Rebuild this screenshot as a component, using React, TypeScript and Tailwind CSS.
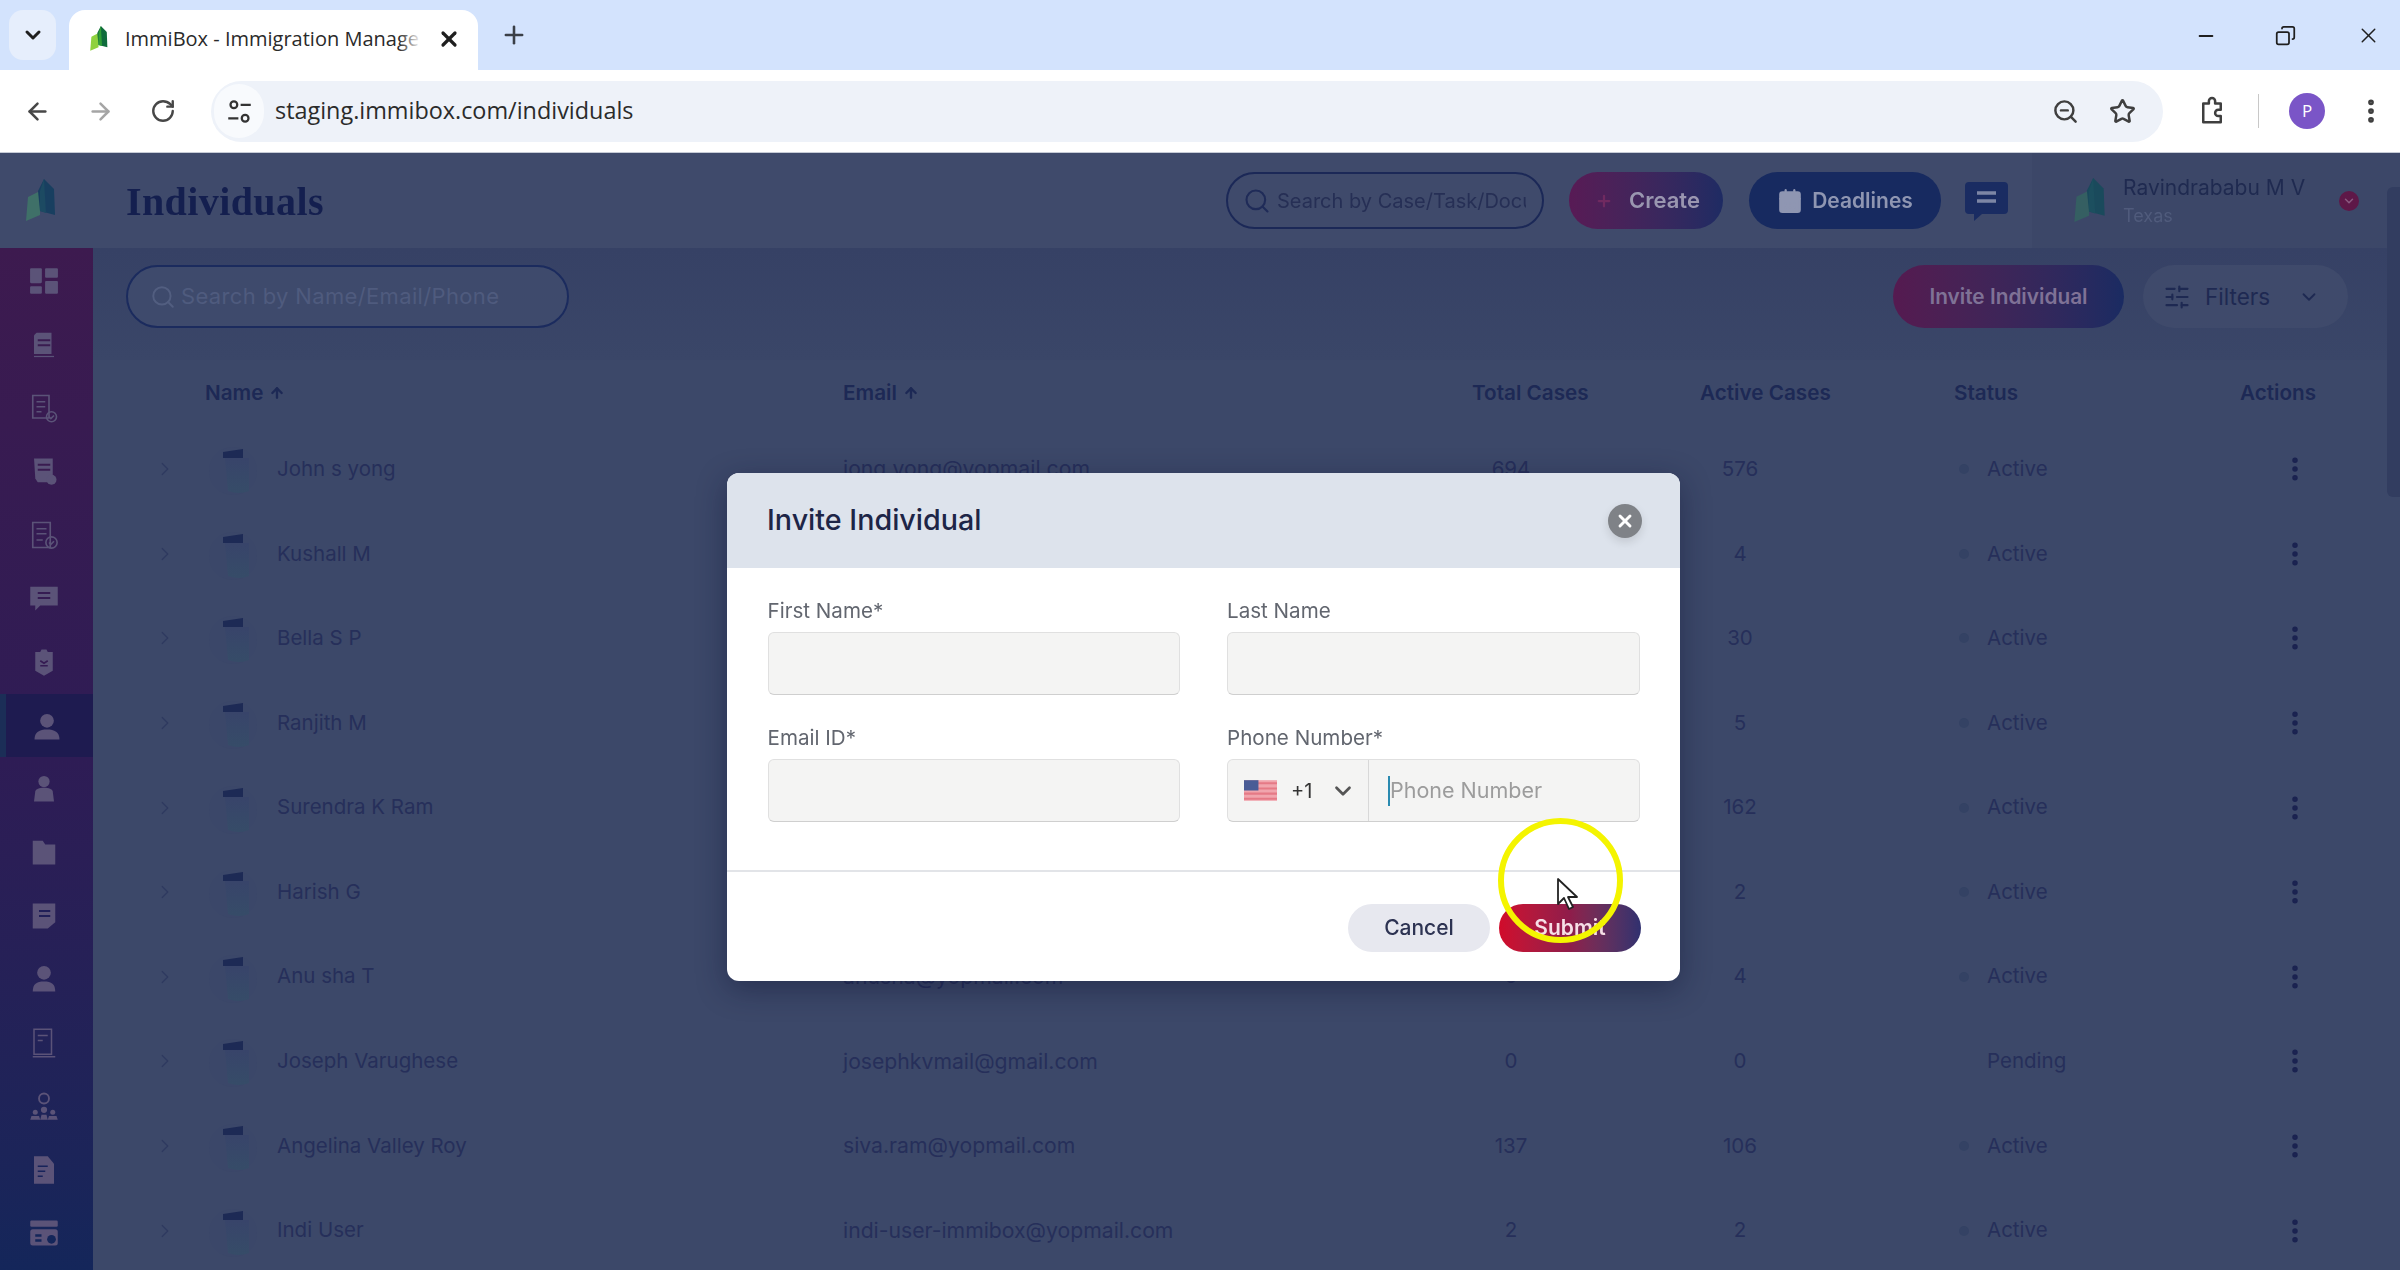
import React from "react";
import {
  ArrowLeft, ArrowRight, ChevronDown, ChevronRight, EllipsisVertical, Minus, Plus, RotateCw, Search,
  SlidersHorizontal, Star, X, ZoomOut, Copy, ArrowUp, CalendarDays,
} from "lucide-react";

const Logo = ({ className, a = "#2f9e35", b = "#0f6b3c", c = "#8fd13f" }: { className?: string; a?: string; b?: string; c?: string }) => (
  <svg viewBox="0 0 32 44" className={className}>
    <path d="M4 18 L16 12 L16 36 L2 42 Z" fill={c} />
    <path d="M14 12 L20 0 L30 10 L31 36 L16 32 Z" fill={b} />
    <path d="M16 12 L20 0 L22 34 L16 32 Z" fill={a} />
  </svg>
);

const s = "w-[30px] h-[30px] text-[#5b5378]";
const sideIcons: React.ReactNode[] = [
  <svg viewBox="0 0 28 26" className={s} fill="currentColor"><rect x="1" y="1" width="11" height="14" rx="1" /><rect x="15" y="1" width="12" height="9" rx="1" /><rect x="1" y="18" width="11" height="7" rx="1" /><rect x="15" y="13" width="12" height="12" rx="1" /></svg>,
  <svg viewBox="0 0 24 24" className={s} fill="currentColor"><path d="M6 3h12v17H4V5z" /><path d="M4 22h16" stroke="currentColor" /><path d="M7 9h10M7 13h10" stroke="#3a1c50" strokeWidth="1.5" /></svg>,
  <svg viewBox="0 0 24 24" className={s} fill="none" stroke="currentColor" strokeWidth="1.3"><path d="M3 2h13v18H3z" /><path d="M6 7h7M6 11h7M6 15h4" /><circle cx="18" cy="19" r="4" /><path d="M16 19l1.5 1.5 2.5-2.5" /></svg>,
  <svg viewBox="0 0 24 24" className={s} fill="currentColor"><path d="M4 2h15v19H7L5 18z" /><path d="M7 7h10M7 11h10" stroke="#3a1c50" strokeWidth="1.5" /><circle cx="18" cy="19" r="4" /></svg>,
  <svg viewBox="0 0 24 24" className={s} fill="none" stroke="currentColor" strokeWidth="1.3"><path d="M3 2h14v20H3z" /><path d="M6 7h8M6 11h8M6 16h5" /><circle cx="18" cy="18" r="4.5" /><path d="M16 18l1.5 1.5 2.5-2.5" /></svg>,
  <svg viewBox="0 0 24 24" className={s} fill="currentColor"><path d="M1 3h22v15H9l-4 4v-4H1z" /><path d="M7 8h10M7 12h10" stroke="#351b52" strokeWidth="1.5" /></svg>,
  <svg viewBox="0 0 24 24" className={s} fill="currentColor"><path d="M5 4h4l1-2h4l1 2h4v15l-7 4-7-4z" /><path d="M9 11l3 2 3-2M9 15h6" stroke="#351b52" strokeWidth="1.3" fill="none" /></svg>,
  <svg viewBox="0 0 24 24" className={s} fill="currentColor"><circle cx="12" cy="7" r="5.5" /><path d="M2 22c0-6 4-8 10-8s10 2 10 8z" /></svg>,
  <svg viewBox="0 0 24 24" className={s} fill="currentColor"><circle cx="12" cy="6" r="4.5" /><path d="M4 22l1-8c.5-2 3-3 7-3s6.500 1 7 3l1 8z" /></svg>,
  <svg viewBox="0 0 24 24" className={s} fill="currentColor"><path d="M3 3h8l2 3h8v16H3z" /></svg>,
  <svg viewBox="0 0 24 24" className={s} fill="currentColor"><path d="M3 2h18v15l-6 5H3z" /><path d="M8 8h9M8 12h9" stroke="#201f58" strokeWidth="1.5" /></svg>,
  <svg viewBox="0 0 24 24" className={s} fill="currentColor"><circle cx="12" cy="7" r="5.500" /><path d="M3 22c0-6 3-8 9-8s9 2 9 8z" /></svg>,
  <svg viewBox="0 0 24 24" className={s} fill="none" stroke="currentColor" strokeWidth="1.2"><path d="M4 1h14v20H4z" /><path d="M3 23h18M7 6h8M7 10h4" /></svg>,
  <svg viewBox="0 0 24 24" className={s} fill="currentColor"><circle cx="12" cy="6" r="4" fill="none" stroke="currentColor" strokeWidth="1.500" /><circle cx="12" cy="15" r="2.500" /><circle cx="5" cy="17" r="2" /><circle cx="19" cy="17" r="2" /><path d="M1 23l1-3h6l1 3zM9 23l1-4h4l1 4zM15 23l1-3h6l1 3z" /></svg>,
  <svg viewBox="0 0 24 24" className={s} fill="currentColor"><path d="M4 1h11l5 6v16H4z" /><path d="M7 9h8M7 13h6M7 17h4" stroke="#17235a" strokeWidth="1.3" /></svg>,
  <svg viewBox="0 0 24 24" className={s} fill="currentColor"><rect x="1" y="2" width="22" height="5" rx="1" /><rect x="1" y="9" width="22" height="13" rx="2" /><circle cx="18" cy="17" r="3.500" fill="#14265a" /><path d="M5 13h5v2H5zM5 17h5v2H5z" fill="#14265a" /></svg>,
];

type Row = [string, string, string, string, string];
const rows: Row[] = [
  ["John s yong", "jong.yong@yopmail.com", "694", "576", "Active"],
  ["Kushall M", "kushall@yopmail.com", "6", "4", "Active"],
  ["Bella S P", "bella.sp@yopmail.com", "34", "30", "Active"],
  ["Ranjith M", "ranjith.m@yopmail.com", "7", "5", "Active"],
  ["Surendra K Ram", "surendra@yopmail.com", "180", "162", "Active"],
  ["Harish G", "harish.g@yopmail.com", "3", "2", "Active"],
  ["Anu sha T", "anusha@yopmail.com", "5", "4", "Active"],
  ["Joseph Varughese", "josephkvmail@gmail.com", "0", "0", "Pending"],
  ["Angelina Valley Roy", "siva.ram@yopmail.com", "137", "106", "Active"],
  ["Indi User", "indi-user-immibox@yopmail.com", "2", "2", "Active"],
];

const cols = "grid grid-cols-[55px_638px_629px_228px_254px_286px_78px] items-center";

const Avatar = () => (
  <svg viewBox="0 0 52 52" className="w-[52px] h-[52px] shrink-0">
    <defs>
      <linearGradient id="av" x1="0" y1="0" x2="0" y2="1">
        <stop offset="0" stopColor="#38446a" />
        <stop offset="1" stopColor="#364c68" />
      </linearGradient>
    </defs>
    <circle cx="24" cy="28" r="24" fill="#3b4769" />
    <path d="M14 9 L34 6 L34 15 L14 15 Z" fill="#1d2a55" />
    <path d="M16 15 H40 L40 48 Q30 52 19 48 Z" fill="url(#av)" />
  </svg>
);

const Field = ({ label, children }: { label: string; children?: React.ReactNode }) => (
  <div className="flex flex-col">
    <label className="text-[20.600px] leading-[28px] text-[#62666f] mb-[7px]">{label}</label>
    <div className="h-[63px] rounded-[6px] border border-[#e0e0e0] border-b-[#cfcfcf] bg-[#f4f4f3] flex items-center">{children}</div>
  </div>
);

export default function App() {
  return (
    <div className="relative w-[2400px] h-[1270px] overflow-hidden flex flex-col font-['Inter',sans-serif] bg-[#3c4869]">
      {/* Tab strip */}
      <div className="h-[70px] shrink-0 bg-[#d3e3fd] flex items-end font-['Open_Sans',sans-serif]">
        <div className="ml-[9px] mb-[10px] w-[47px] h-[50px] rounded-[14px] bg-[#e6eefc] flex items-center justify-center">
          <ChevronDown className="w-[24px] h-[24px] text-[#1f1f1f]" strokeWidth={3} />
        </div>
        <div className="ml-[13px] w-[409px] h-[60px] rounded-t-[16px] bg-white flex items-center pl-[18px] pb-[3px]">
          <Logo className="w-[23px] h-[26px] shrink-0" />
          <span className="relative ml-[15px] w-[296px] overflow-hidden whitespace-nowrap text-[20px] leading-[28px] text-[#2a2a2a]">
            ImmiBox - Immigration Manage
            <span className="absolute right-0 top-0 bottom-0 w-[22px] bg-gradient-to-r from-transparent to-white" />
          </span>
          <X className="ml-[16px] w-[24px] h-[24px] text-[#1f1f1f]" strokeWidth={3.2} />
        </div>
        <Plus className="ml-[22px] mb-[21px] w-[28px] h-[28px] text-[#3a3f47]" strokeWidth={2.2} />
        <div className="ml-auto flex items-center mb-[22px]">
          <Minus className="w-[22px] h-[22px] text-[#1f1f1f]" strokeWidth={2} />
          <Copy className="ml-[58px] w-[21px] h-[21px] text-[#1f1f1f] -scale-x-100" strokeWidth={2} />
          <X className="ml-[60px] mr-[19px] w-[25px] h-[25px] text-[#1f1f1f]" strokeWidth={1.4} />
        </div>
      </div>
      {/* Toolbar */}
      <div className="h-[83px] shrink-0 bg-white flex items-center border-b border-[#c6cbd6] font-['Open_Sans',sans-serif]">
        <ArrowLeft className="ml-[24px] w-[27px] h-[27px] text-[#474747]" strokeWidth={2.2} />
        <ArrowRight className="ml-[36px] w-[27px] h-[27px] text-[#a5a5a5]" strokeWidth={2.2} />
        <RotateCw className="ml-[36px] w-[26px] h-[26px] text-[#474747]" strokeWidth={2.2} />
        <div className="ml-[35px] w-[1952px] h-[61px] rounded-full bg-[#eef2f9] flex items-center">
          <div className="ml-[3px] w-[50px] h-[54px] rounded-full bg-[#f8fafd] flex items-center justify-center">
            <svg viewBox="0 0 24 24" className="w-[27px] h-[27px]" fill="none" stroke="#333" strokeWidth="2">
              <circle cx="7" cy="6" r="3" />
              <path d="M13 6h9M2 18h9" />
              <circle cx="17" cy="18" r="3" />
            </svg>
          </div>
          <span className="ml-[11px] text-[23.400px] text-[#2b2b2b]">staging.immibox.com/individuals</span>
          <ZoomOut className="ml-auto w-[27px] h-[27px] text-[#3f3f3f]" strokeWidth={2.2} />
          <Star className="ml-[30px] mr-[27px] w-[27px] h-[27px] text-[#3f3f3f]" strokeWidth={2.2} />
        </div>
        <svg viewBox="0 0 24 24" className="ml-[34px] w-[30px] h-[30px]" fill="none" stroke="#3f3f3f" strokeWidth="2" strokeLinejoin="round">
          <path d="M5 6h4.500V4a2.500 2.500 0 0 1 5 0v2H19v5h-2a2.500 2.500 0 0 0 0 5h2v5H5z" />
        </svg>
        <div className="ml-[31px] w-px h-[34px] bg-[#c8c8c8]" />
        <div className="ml-[30px] w-[36px] h-[36px] rounded-full bg-[#7a55c7] text-white text-[17px] flex items-center justify-center">P</div>
        <EllipsisVertical className="ml-[31px] w-[30px] h-[30px] text-[#3f3f3f]" strokeWidth={2.6} />
      </div>

      {/* App header */}
      <div className="h-[95px] shrink-0 flex items-center bg-[#3f4a6b] blur-[0.5px]">
        <div className="w-[93px] shrink-0 flex justify-center">
          <Logo className="w-[32px] h-[44px] mr-[14px]" a="#1c4a62" b="#183f60" c="#3f7068" />
        </div>
        <h1 className="ml-[33px] mt-[2px] text-[40px] tracking-[0.4px] font-bold text-[#141f4f] font-['Liberation_Serif',serif]">Individuals</h1>
        <div className="ml-auto flex items-center">
          <div className="w-[318px] h-[57px] rounded-full border-2 border-[#1b2857] flex items-center pl-[15px] pr-[16px] overflow-hidden">
            <Search className="w-[28px] h-[28px] text-[#1f2b58] shrink-0" strokeWidth={1.8} />
            <span className="ml-[6px] text-[20px] text-[#262f55] whitespace-nowrap overflow-hidden">Search by Case/Task/Document</span>
          </div>
          <button className="ml-[25px] w-[154px] h-[57px] rounded-full bg-gradient-to-r from-[#581a55] to-[#1e2b63] text-[#9a96b0] text-[22px] font-semibold flex items-center justify-center gap-[16px] pl-[3px]">
            <Plus className="w-[18px] h-[18px] text-[#702a60]" strokeWidth={3} />Create
          </button>
          <button className="ml-[26px] w-[192px] h-[57px] rounded-full bg-[#172a60] text-[#8f96b2] text-[21px] font-semibold flex items-center justify-center gap-[9px]">
            <CalendarDays className="w-[26px] h-[26px] text-[#8f96b2]" fill="#8f96b2" stroke="#8f96b2" />Deadlines
          </button>
          <svg viewBox="0 0 45 40" className="ml-[23px] w-[45px] h-[40px]">
            <path d="M5 1h35a4 4 0 0 1 4 4v24a4 4 0 0 1-4 4H18l-8 7v-7H5a4 4 0 0 1-4-4V5a4 4 0 0 1 4-4z" fill="#1a2c62" />
            <path d="M13 12h19M13 20h19" stroke="#7d86a5" strokeWidth="3.500" />
          </svg>
          <div className="ml-[23px] w-[368px] h-[95px] bg-[#3c4768] flex items-center pl-[39px]">
            <Logo className="w-[36px] h-[46px] shrink-0" a="#1c4f5f" b="#1a4a5c" c="#355f62" />
            <div className="ml-[16px] flex flex-col">
              <span className="text-[21px] leading-[28px] text-[#1f2a50]">Ravindrababu M V</span>
              <span className="mt-[2px] text-[18px] leading-[24px] text-[#505b7c]">Texas</span>
            </div>
            <div className="ml-[34px] w-[20px] h-[20px] rounded-full bg-[#5e1848] flex items-center justify-center">
              <ChevronDown className="w-[14px] h-[14px] text-[#8a5a80]" strokeWidth={2.500} />
            </div>
          </div>
        </div>
      </div>

      <div className="flex-1 flex min-h-0">
        {/* Sidebar */}
        <aside className="w-[93px] shrink-0 bg-gradient-to-b from-[#3d1a4f] via-[#2e1c55] to-[#14265a] flex flex-col pt-[1px] blur-[0.4px]">
          {sideIcons.map((icon, i) => (
            <div key={i} className={`h-[63.500px] shrink-0 flex items-center justify-center pr-[6px] ${i === 7 ? "bg-[#1e1b50] border-l-[6px] border-[#1b2e57] pt-[3px]" : ""}`}>
              {icon}
            </div>
          ))}
        </aside>

        {/* Main */}
        <main className="relative flex-1 min-w-0 bg-[#3c4869] blur-[0.5px]">
          <div className="pt-[17px] pl-[33px] flex items-center bg-gradient-to-b from-[#364165] to-[#3a4668] pb-[32px]">
            <div className="w-[443px] h-[63px] rounded-full border-2 border-[#1b2b5e] bg-[#3e4a6c] flex items-center pl-[22px]">
              <Search className="w-[26px] h-[26px] text-[#525e80]" strokeWidth={1.800} />
              <span className="ml-[5px] text-[22px] text-[#4f5b7e] tracking-[0.35px]">Search by Name/Email/Phone</span>
            </div>
            <div className="ml-auto flex items-center pr-[52px]">
              <button className="w-[231px] h-[63px] rounded-full bg-gradient-to-r from-[#551a50] to-[#1a2b62] text-[#7f7296] text-[20.800px] font-semibold">Invite Individual</button>
              <div className="ml-[19px] w-[205px] h-[63px] rounded-full bg-[#3f4a6b] flex items-center pl-[20px] text-[#1e2952]">
                <SlidersHorizontal className="w-[28px] h-[28px]" strokeWidth={1.800} />
                <span className="ml-[14px] text-[22.500px]">Filters</span>
                <ChevronDown className="ml-[28px] w-[22px] h-[22px]" strokeWidth={2} />
              </div>
            </div>
          </div>

          <div className="pl-[57px]">
            <div className={`${cols} h-[66px] mb-[1px] text-[20.700px] font-semibold text-[#1d2955]`}>
              <span />
              <span className="flex items-center gap-[6px]">Name <ArrowUp className="w-[16px] h-[16px]" strokeWidth={3.500} /></span>
              <span className="flex items-center gap-[6px]">Email <ArrowUp className="w-[16px] h-[16px]" strokeWidth={3.500} /></span>
              <span>Total Cases</span>
              <span>Active Cases</span>
              <span>Status</span>
              <span>Actions</span>
            </div>
            {rows.map((r) => (
              <div key={r[0]} className={`${cols} h-[84.600px] text-[20.500px] text-[#262f5a]`}>
                <ChevronRight className="w-[22px] h-[22px] text-[#2f3a60] ml-[4px]" strokeWidth={1.500} />
                <span className="flex items-center">
                  <span className="ml-[4px]"><Avatar /></span>
                  <span className="ml-[16px]">{r[0]}</span>
                </span>
                <span className="text-[21.200px]">{r[1]}</span>
                <span className="w-[78px] text-center">{r[2]}</span>
                <span className="w-[80px] text-center">{r[3]}</span>
                <span className="flex items-center">
                  <span className={`ml-[5px] w-[10px] h-[10px] rounded-full ${r[4] === "Active" ? "bg-[#344264]" : ""}`} />
                  <span className="ml-[18px]">{r[4]}</span>
                </span>
                <EllipsisVertical className="ml-[40px] w-[30px] h-[30px] text-[#1a2250]" strokeWidth={2.400} />
              </div>
            ))}
          </div>

          {/* Scrollbar thumb */}
          <div className="absolute right-0 top-[-61px] w-[13px] h-[310px] rounded-l-[6px] bg-[#323d60]" />
        </main>
      </div>

      {/* Modal */}
      <div className="absolute left-[727px] top-[473px] w-[953px] h-[508px] rounded-[12px] bg-white overflow-hidden shadow-[0_8px_30px_rgba(15,20,50,0.45)] flex flex-col">
        <div className="h-[95px] shrink-0 bg-[#dde3ec] flex items-center pl-[40px] pr-[38px]">
          <h2 className="text-[28.700px] font-medium text-[#1d2547] -mt-[2px]">Invite Individual</h2>
          <div className="ml-auto w-[34px] h-[34px] rounded-full bg-[#7f8287] flex items-center justify-center shadow-[0_4px_10px_rgba(0,0,0,0.12)]">
            <X className="w-[20px] h-[20px] text-white" strokeWidth={3.500} />
          </div>
        </div>
        <div className="grid grid-cols-[412px_413px] gap-x-[47.500px] gap-y-[29px] pl-[40.500px] pt-[29px] pb-[48px] border-b-2 border-[#e2e4e8]">
          <Field label="First Name*" />
          <Field label="Last Name" />
          <Field label="Email ID*" />
          <Field label="Phone Number*">
            <div className="w-[141px] h-full shrink-0 flex items-center pl-[16px] border-r border-[#d8d8d8]">
              <svg viewBox="0 0 32 20" className="w-[33px] h-[21px] shrink-0">
                <rect width="32" height="20" fill="#f1a5ad" />
                <path d="M0 3h32M0 8h32M0 13h32M0 18h32" stroke="#e57a86" strokeWidth="2" />
                <rect width="14" height="10" fill="#4a5c96" />
              </svg>
              <span className="ml-[14px] text-[20px] text-[#333]">+1</span>
              <ChevronDown className="ml-[18px] w-[26px] h-[26px] text-[#555]" strokeWidth={2.500} />
            </div>
            <span className="ml-[19px] w-[2px] h-[30px] bg-[#2a8ab0]" />
            <span className="text-[21.500px] text-[#9c9c9c]">Phone Number</span>
          </Field>
        </div>
        <div className="flex-1 flex items-start justify-end pt-[32px] pr-[39px] gap-[9px]">
          <button className="w-[142px] h-[48px] rounded-full bg-[#e7e8ef] text-[21px] font-medium text-[#2d3352]">Cancel</button>
          <button className="w-[142px] h-[48px] rounded-full bg-gradient-to-r from-[#d10a2a] via-[#8f1c4a] to-[#30306f] text-[21px] font-semibold text-[#f6dfe6]">Submit</button>
        </div>
      </div>

      {/* Click highlight and pointer */}
      <div className="absolute left-[1498px] top-[818px] w-[125px] h-[125px] rounded-full border-[6px] border-[#f4f400]" />
      <svg viewBox="0 0 24 34" className="absolute left-[1556px] top-[877px] w-[24px] h-[34px]">
        <path d="M2 2 L2 27 L8 21 L13 32 L17 30 L12 20 L21 20 Z" fill="#fff" stroke="#222" strokeWidth="1.800" strokeLinejoin="round" />
      </svg>
    </div>
  );
}
